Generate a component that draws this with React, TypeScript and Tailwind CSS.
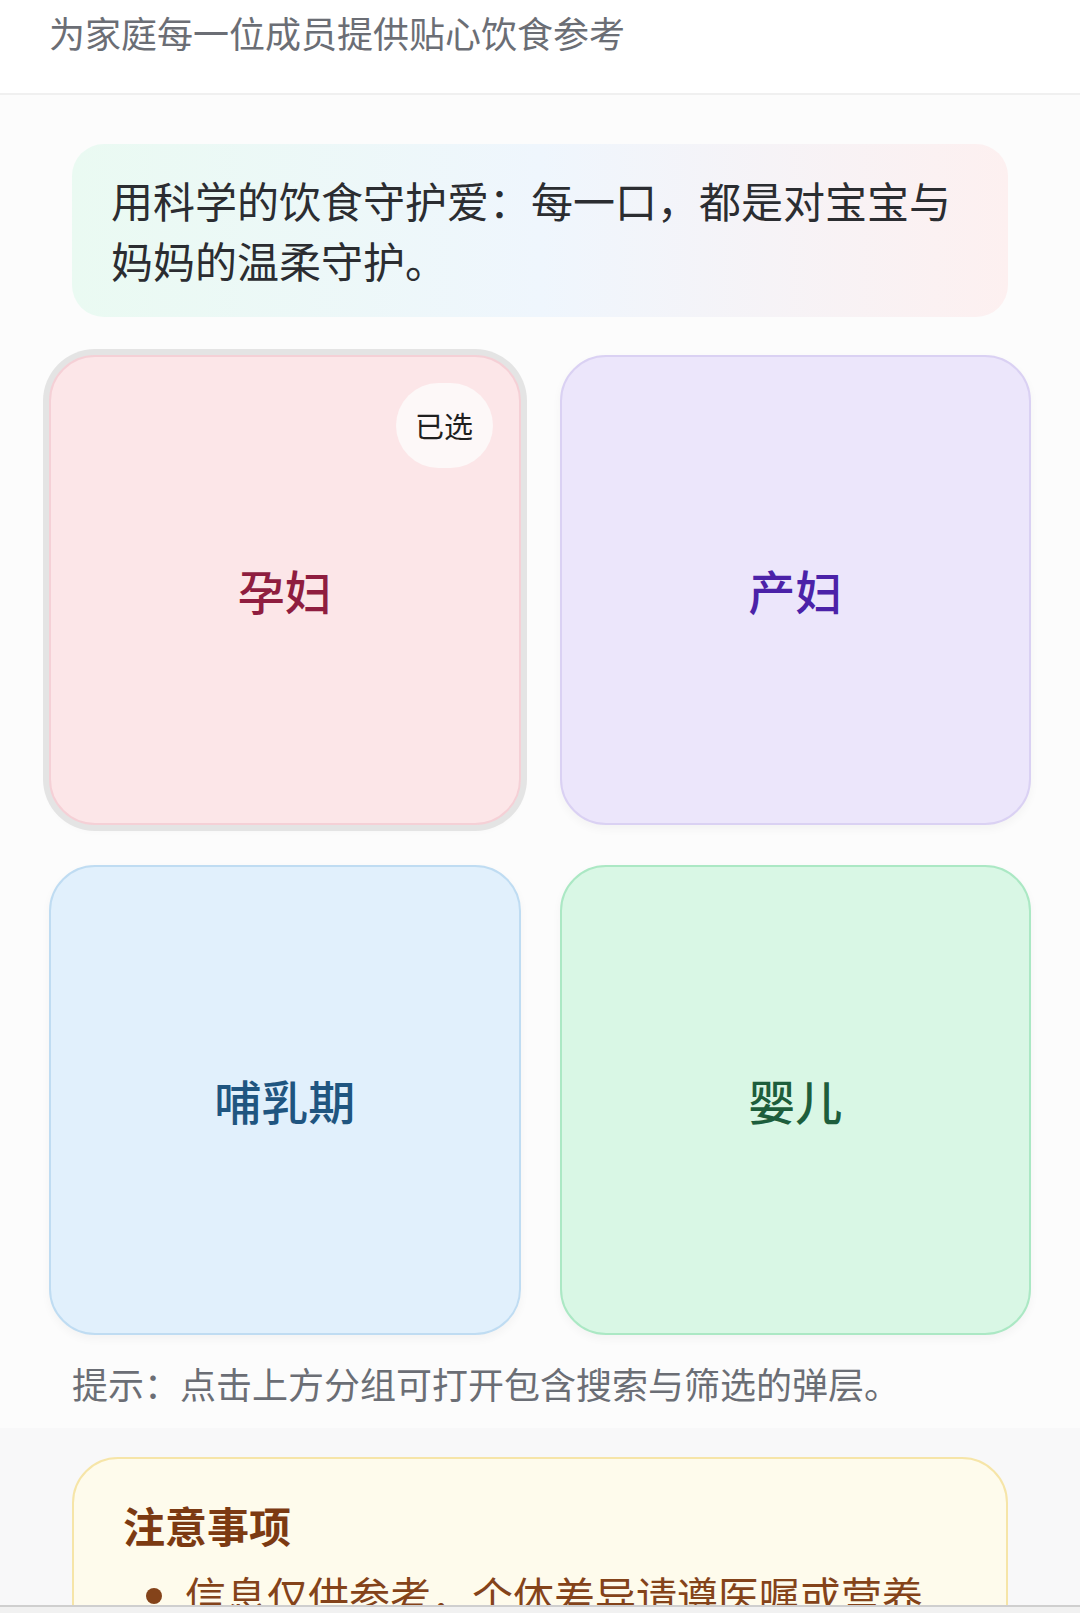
const groups = [
  { name: '孕妇', selected: true, card: 'bg-[#fce6e8] border-[#f5d0d6] ring-[6px] ring-[#e4e4e4]', text: 'text-[#8f1d3f]' },
  { name: '产妇', selected: false, card: 'bg-[#ece6fb] border-[#dad1f3]', text: 'text-[#4b22a8]' },
  { name: '哺乳期', selected: false, card: 'bg-[#e1f0fc] border-[#bfdcf2]', text: 'text-[#1f5580]' },
  { name: '婴儿', selected: false, card: 'bg-[#d9f7e5] border-[#abe8c4]', text: 'text-[#1d5e3c]' },
];

function GroupCard({ name, selected, card, text }: { name: string, selected: boolean, card: string, text: string }) {
  return (
    <button className={`relative h-[470px] rounded-[46px] border-2 shadow-[0_4px_10px_rgba(0,0,0,0.04)] flex items-center justify-center ${card}`}>
      {selected &&
        <span className="absolute top-[26px] right-[26px] w-[97px] h-[85px] rounded-full bg-[#fdf8f8] flex items-center justify-center text-[29px] text-[#1f1f1f]">已选</span>
      }
      <span className={`text-[47px] font-medium ${text}`}>{name}</span>
    </button>
  );
}

export default function App() {
  return (
    <div className="relative h-[1613px] overflow-hidden bg-[#fcfcfc] font-['Noto_Sans_CJK_SC','Noto_Sans',sans-serif]">
      <header className="h-[95px] bg-white border-b-2 border-[#f0f0f0] pl-[49px] pt-[11px]">
        <p className="text-[36px] leading-[42px] text-[#6b6e75]">为家庭每一位成员提供贴心饮食参考</p>
      </header>

      <section className="pt-[49px]">
        <div className="mx-[72px] rounded-[32px] bg-linear-to-r from-[#eafaf2] via-[#eff6fd] to-[#fdf0f0] pl-[39px] pr-[30px] pt-[26px] pb-[27px]">
          <p className="text-[42px] leading-[60px] text-[#2b2d31]">用科学的饮食守护爱：每一口，都是对宝宝与妈妈的温柔守护。</p>
        </div>

        <div className="grid grid-cols-2 gap-x-[39px] gap-y-[40px] px-[49px] mt-[38px]">
          {groups.map((g) => (
            <GroupCard key={g.name} {...g} />
          ))}
        </div>

        <p className="px-[72px] mt-[27px] text-[36px] leading-[42px] text-[#6b6e75]">提示：点击上方分组可打开包含搜索与筛选的弹层。</p>
      </section>

      <section className="mt-[24px] bg-[#f8f8f9] pt-[29px] h-full">
        <div className="mx-[72px] rounded-[46px] border-2 border-[#f6e5a8] bg-[#fefbec] pl-[49px] pr-[60px] pt-[37px]">
          <h2 className="text-[42px] leading-[58px] font-bold text-[#7c3a12]">注意事项</h2>
          <ul className="mt-[12px] list-disc pl-[62px] text-[41px] leading-[56px] text-[#84431a] marker:text-[#84431a]">
            <li>信息仅供参考，个体差异请遵医嘱或营养师建议。</li>
            <li>过敏体质请仔细核对食材成分。</li>
          </ul>
        </div>
      </section>

      <div className="absolute bottom-0 left-0 right-0 h-[8px] bg-[#f1f1f1] border-t-2 border-[#cfcfcf]" />
    </div>
  );
}
